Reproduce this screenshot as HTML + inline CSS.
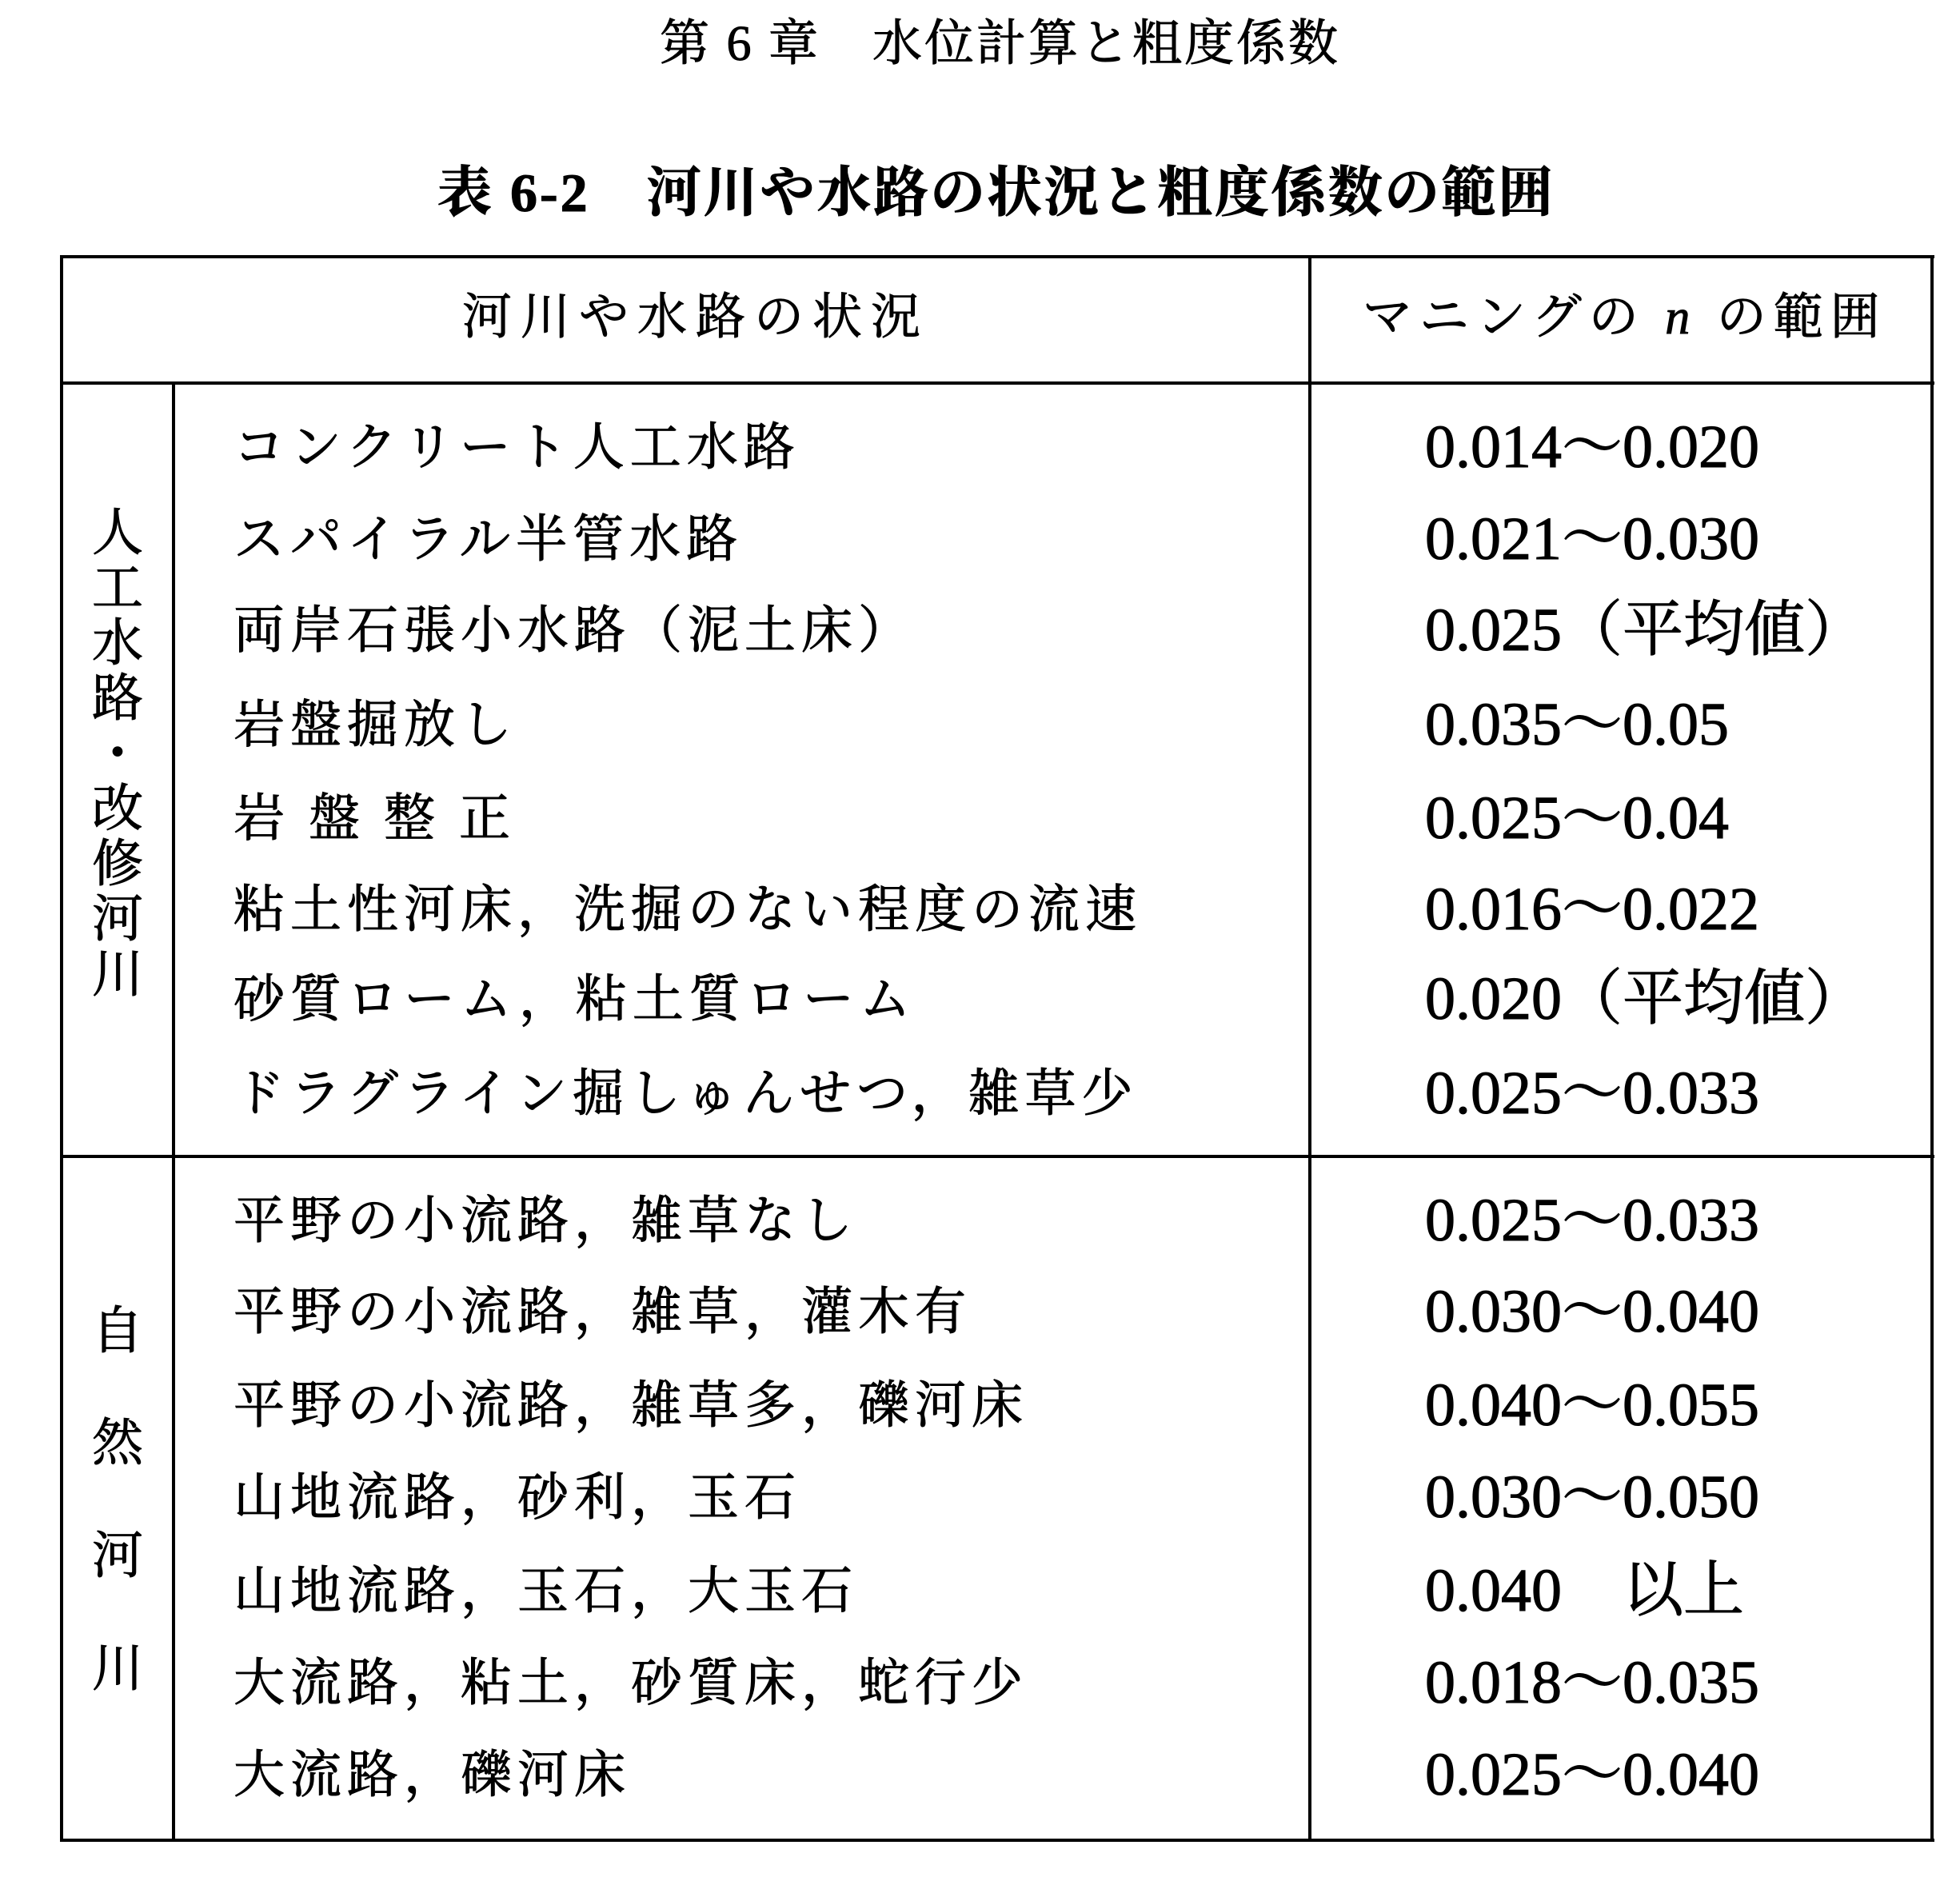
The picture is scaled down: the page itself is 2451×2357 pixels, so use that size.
<!DOCTYPE html>
<html><head><meta charset="utf-8"><style>
html,body{margin:0;padding:0;background:#fff;}
body{width:2451px;height:2357px;position:relative;overflow:hidden;font-family:"Liberation Serif","Noto Serif CJK SC","Noto Sans CJK JP",serif;color:#000;}
.t{position:absolute;white-space:nowrap;line-height:1;-webkit-text-stroke:1px #000;}
.l{position:absolute;background:#000;}
.j{font-size:64px;letter-spacing:7px;left:292px;}
.n{font-size:76px;left:1782px;font-family:"Liberation Serif","Noto Serif CJK SC",serif;}
.v{font-size:64px;left:112px;width:70px;text-align:center;}
</style></head><body>
<div class="t" style="left:825px;top:24px;font-size:62px;letter-spacing:3px;">第 6 章　水位計算と粗度係数</div>
<div class="t" style="left:547px;top:207px;font-size:68px;letter-spacing:3px;font-weight:bold;font-family:'Liberation Serif','Noto Serif CJK SC',serif;">表 6-2　河川や水路の状況と粗度係数の範囲</div>

<div class="l" style="left:75px;top:319px;width:2344px;height:4px;"></div>
<div class="l" style="left:75px;top:2299px;width:2344px;height:4px;"></div>
<div class="l" style="left:75px;top:319px;width:4px;height:1984px;"></div>
<div class="l" style="left:2414px;top:319px;width:4px;height:1984px;"></div>
<div class="l" style="left:75px;top:477px;width:2344px;height:4px;"></div>
<div class="l" style="left:75px;top:1444px;width:2344px;height:4px;"></div>
<div class="l" style="left:1636px;top:319px;width:4px;height:1984px;"></div>
<div class="l" style="left:215px;top:477px;width:4px;height:1826px;"></div>

<div class="t" style="left:578px;top:366px;font-size:62px;letter-spacing:11px;">河川や水路の状況</div>
<div class="t" style="left:1704px;top:366px;font-size:62px;letter-spacing:9px;">マニングの <i>n</i> の範囲</div>

<div class="t v" style="top:632px;line-height:69px;white-space:normal;">人<br>工<br>水<br>路<br>・<br>改<br>修<br>河<br>川</div>
<div class="t v" style="top:1633px;">自</div>
<div class="t v" style="top:1773px;">然</div>
<div class="t v" style="top:1914px;">河</div>
<div class="t v" style="top:2055px;">川</div>

<div class="t j" style="top:528px;">コンクリート人工水路</div>
<div class="t j" style="top:643px;">スパイラル半管水路</div>
<div class="t j" style="top:757px;">両岸石張小水路（泥土床）</div>
<div class="t j" style="top:875px;">岩盤掘放し</div>
<div class="t j" style="top:992px;">岩 盤 整 正</div>
<div class="t j" style="top:1106px;">粘土性河床，洗掘のない程度の流速</div>
<div class="t j" style="top:1218px;">砂質ローム，粘土質ローム</div>
<div class="t j" style="top:1336px;">ドラグライン掘しゅんせつ，雑草少</div>
<div class="t j" style="top:1495px;">平野の小流路，雑草なし</div>
<div class="t j" style="top:1609px;">平野の小流路，雑草，灌木有</div>
<div class="t j" style="top:1726px;">平野の小流路，雑草多，礫河床</div>
<div class="t j" style="top:1841px;">山地流路，砂利，玉石</div>
<div class="t j" style="top:1958px;">山地流路，玉石，大玉石</div>
<div class="t j" style="top:2073px;">大流路，粘土，砂質床，蛇行少</div>
<div class="t j" style="top:2188px;">大流路，礫河床</div>

<div class="t n" style="top:521px;">0.014〜0.020</div>
<div class="t n" style="top:636px;">0.021〜0.030</div>
<div class="t n" style="top:750px;">0.025（平均値）</div>
<div class="t n" style="top:868px;">0.035〜0.05</div>
<div class="t n" style="top:985px;">0.025〜0.04</div>
<div class="t n" style="top:1099px;">0.016〜0.022</div>
<div class="t n" style="top:1211px;">0.020（平均値）</div>
<div class="t n" style="top:1329px;">0.025〜0.033</div>
<div class="t n" style="top:1488px;">0.025〜0.033</div>
<div class="t n" style="top:1602px;">0.030〜0.040</div>
<div class="t n" style="top:1719px;">0.040〜0.055</div>
<div class="t n" style="top:1834px;">0.030〜0.050</div>
<div class="t n" style="top:1951px;">0.040　以上</div>
<div class="t n" style="top:2066px;">0.018〜0.035</div>
<div class="t n" style="top:2181px;">0.025〜0.040</div>
</body></html>
